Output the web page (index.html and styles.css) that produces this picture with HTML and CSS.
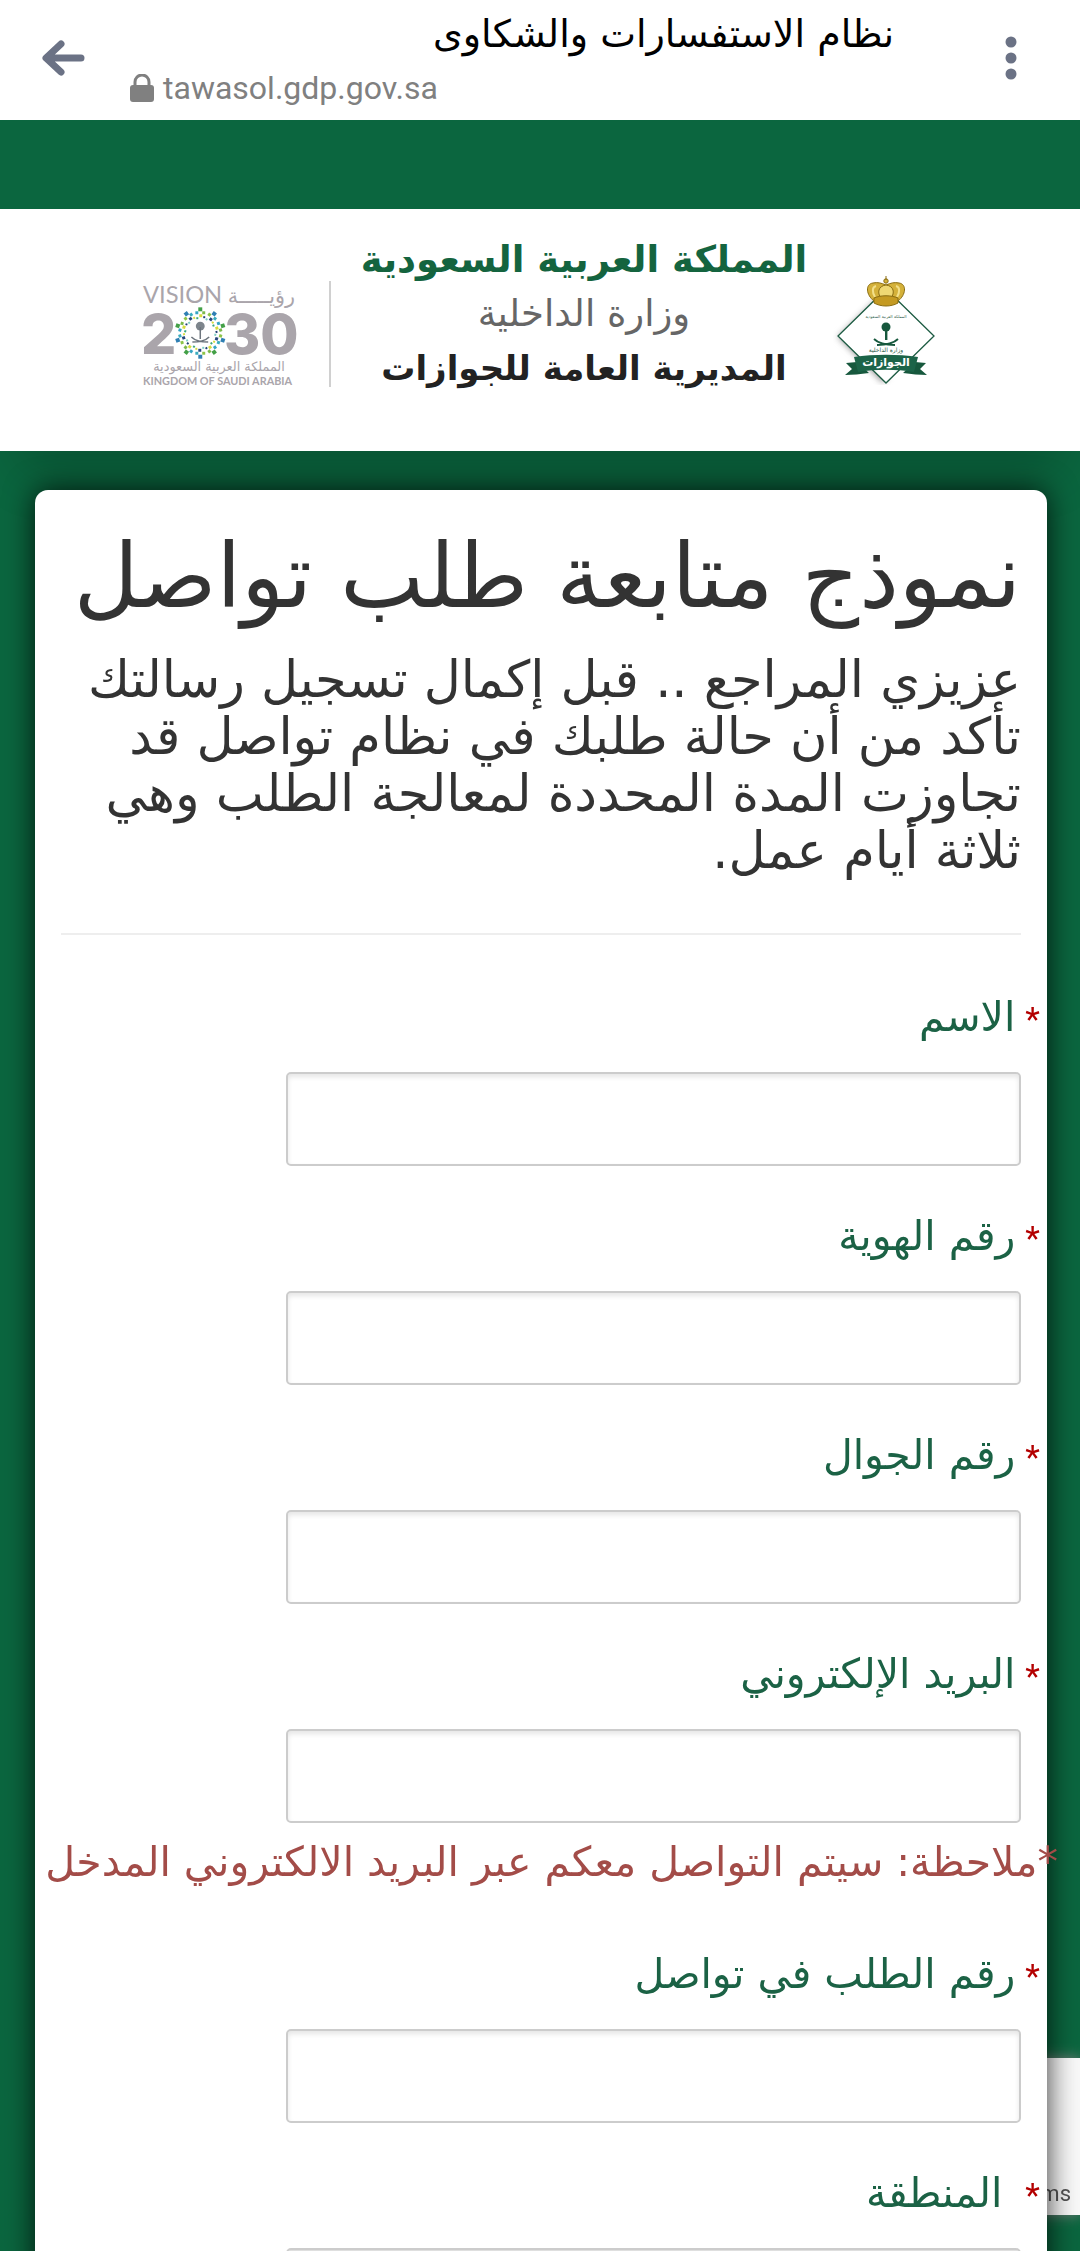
FILE: index.html
```html
<!DOCTYPE html>
<html lang="ar" dir="rtl">
<head>
    <meta charset="UTF-8">
    <meta name="viewport" content="width=device-width, initial-scale=1.0">
    <title>نظام الاستفسارات والشكاوى</title>
    <link rel="stylesheet" href="styles.css">
</head>
<body>
    <div class="browser-bar">
        <button class="icon-btn" type="button" aria-label="القائمة">
            <svg width="12" height="44" viewBox="0 0 12 44" fill="#6b7285">
                <circle cx="6" cy="6" r="5.5"/>
                <circle cx="6" cy="22" r="5.5"/>
                <circle cx="6" cy="38" r="5.5"/>
            </svg>
        </button>
        <div class="page-info">
            <div class="page-title">نظام الاستفسارات والشكاوى</div>
            <div class="page-url" dir="ltr">
                <svg width="24" height="28" viewBox="0 0 24 28">
                    <path d="M5 13V8a7 7 0 0 1 14 0v5" fill="none" stroke="#808080" stroke-width="3"/>
                    <rect x="0" y="11" width="24" height="17" rx="3" fill="#808080"/>
                </svg>
                <span>tawasol.gdp.gov.sa</span>
            </div>
        </div>
        <button class="icon-btn" type="button" aria-label="رجوع">
            <svg width="44" height="38" viewBox="0 0 44 38" fill="none" stroke="#6b7285" stroke-width="7" stroke-linecap="round" stroke-linejoin="round">
                <path d="M20 5L5 19l15 14M6 19h34"/>
            </svg>
        </button>
    </div>

    <div class="page">
        <header class="site-header">
            <svg class="emblem" width="104" height="112" viewBox="0 0 104 112">
                <path class="shadow" d="M50 20L5 64l45 46 6-8z"/>
                <path d="M53 16L101 63 53 110 5 63z" fill="#fff" stroke="#1c5b42" stroke-width="1.3"/>
                <g fill="#d4b13a" stroke="#8a6d12" stroke-width="1">
                    <path d="M41 28c-8-6-9-17-1-18 5-1 8 0 13 2 5-2 8-3 13-2 8 1 7 12-1 18-6 4-18 4-24 0z"/>
                    <path d="M42 24c-3-5-3-10 1-11M64 24c3-5 3-10-1-11" fill="none" stroke="#f3e08a" stroke-width="2"/>
                    <path d="M48 25c-4-5-3-12 5-13 8 1 9 8 5 13z" fill="#efd873"/>
                    <path d="M41 25c7-3 17-3 24 0v5c-7 4-17 4-24 0z" fill="#c49a22"/>
                    <circle cx="53" cy="8" r="2.2"/>
                    <path d="M53 3v4"/>
                </g>
                <text x="53" y="45" class="emblem-small emblem-country">المملكة العربية السعودية</text>
                <g fill="#17583d">
                    <circle cx="53" cy="54" r="4.5"/>
                    <path d="M52 57h2.400v10h-2.400z"/>
                </g>
                <g fill="none" stroke="#17583d" stroke-width="1.800">
                    <path d="M41 66c5 5 13 6 21 6M65 66c-5 5-13 6-21 6"/>
                </g>
                <text x="53" y="79" class="emblem-small">وزارة الداخلية</text>
                <path d="M24 89l-11 1 6 6-7 6c8 0 15-1 24-2zM82 89l11 1-6 6 7 6c-8 0-15-1-24-2z" fill="#17583d"/>
                <path d="M21 84c20-3 44-3 64 0l-4 15c-18-3-38-3-56 0z" fill="#1c6448"/>
                <text x="53" y="93" class="emblem-name">الجوازات</text>
            </svg>

            <div class="org">
                <div class="org-line org-country">المملكة العربية السعودية</div>
                <div class="org-line org-ministry">وزارة الداخلية</div>
                <div class="org-line org-dept">المديرية العامة للجوازات</div>
            </div>

            <svg class="vision" width="160" height="106" viewBox="0 0 160 106" direction="ltr">
                <defs>
                    <g id="ray">
                        <rect x="-2" y="-26" width="4" height="4" fill="#43a047"/>
                        <rect x="-5" y="-22" width="3" height="3" fill="#35a5c4"/>
                        <rect x="2" y="-22" width="3" height="3" fill="#7cb94a"/>
                        <rect x="-1" y="-19" width="3" height="3" fill="#d6dc3e"/>
                        <rect x="3" y="-17" width="2" height="2" fill="#1f3f74"/>
                        <rect x="-4" y="-16" width="2" height="2" fill="#3aa67d"/>
                    </g>
                    <g id="ray-blue">
                        <rect x="-2" y="-26" width="4" height="4" fill="#2f7fb3"/>
                        <rect x="-5" y="-22" width="3" height="3" fill="#8dc448"/>
                        <rect x="2" y="-22" width="3" height="3" fill="#3aacbf"/>
                        <rect x="-1" y="-19" width="3" height="3" fill="#27477c"/>
                        <rect x="3" y="-17" width="2" height="2" fill="#d6dc3e"/>
                        <rect x="-4" y="-16" width="2" height="2" fill="#7fd0c5"/>
                    </g>
                </defs>
                <text x="0" y="22" class="v-word">VISION</text>
                <text x="154" y="22" class="v-arabic">رؤيـــــة</text>
                <text x="-2" y="73" class="v-number">2</text>
                <text x="82" y="73" class="v-number">30</text>
                <g transform="translate(58 52)">
                    <use href="#ray"/>
                    <use href="#ray-blue" transform="rotate(36)"/>
                    <use href="#ray" transform="rotate(72)"/>
                    <use href="#ray-blue" transform="rotate(108)"/>
                    <use href="#ray" transform="rotate(144)"/>
                    <use href="#ray-blue" transform="rotate(180)"/>
                    <use href="#ray" transform="rotate(216)"/>
                    <use href="#ray-blue" transform="rotate(252)"/>
                    <use href="#ray" transform="rotate(288)"/>
                    <use href="#ray-blue" transform="rotate(324)"/>
                    <circle cx="0" cy="-7" r="4.500" fill="#7d858c"/>
                    <path d="M0-6V6M-9 4c5 5 11 5 17 5M9 4c-5 5-11 5-17 5" fill="none" stroke="#6d757d" stroke-width="1.500"/>
                </g>
                <text x="77" y="90" class="v-kingdom-ar">المملكة العربية السعودية</text>
                <text x="0" y="105" class="v-kingdom-en">KINGDOM OF SAUDI ARABIA</text>
            </svg>
        </header>

        <main class="card">
            <h1>نموذج متابعة طلب تواصل</h1>
            <p class="intro">
                عزيزي المراجع .. قبل إكمال تسجيل رسالتك<br>
                تأكد من أن حالة طلبك في نظام تواصل قد<br>
                تجاوزت المدة المحددة لمعالجة الطلب وهي<br>
                ثلاثة أيام عمل.
            </p>
            <hr>

            <form class="follow-form">
                <div class="field">
                    <label for="name"><span class="req">*</span>الاسم</label>
                    <input type="text" id="name">
                </div>
                <div class="field">
                    <label for="identity"><span class="req">*</span>رقم الهوية</label>
                    <input type="text" id="identity">
                </div>
                <div class="field">
                    <label for="mobile"><span class="req">*</span>رقم الجوال</label>
                    <input type="tel" id="mobile">
                </div>
                <div class="field">
                    <label for="email"><span class="req">*</span>البريد الإلكتروني</label>
                    <input type="email" id="email">
                    <p class="note">*ملاحظة: سيتم التواصل معكم عبر البريد الالكتروني المدخل</p>
                </div>
                <div class="field">
                    <label for="request"><span class="req">*</span>رقم الطلب في تواصل</label>
                    <input type="text" id="request">
                </div>
                <div class="field">
                    <label for="region"><span class="req">*</span>&nbsp;المنطقة</label>
                    <select id="region"></select>
                </div>
            </form>
        </main>
    </div>

    <div class="captcha-badge" dir="ltr">ms</div>
</body>
</html>
```
FILE: styles.css
```css
* {
    box-sizing: border-box;
}

body {
    margin: 0;
    height: 100vh;
    display: flex;
    flex-direction: column;
    overflow: hidden;
    background-color: #0b663f;
    font-family: "DejaVu Sans", sans-serif;
    color: #333;
}

/* in-app browser bar */
.browser-bar {
    height: 120px;
    flex-shrink: 0;
    display: flex;
    align-items: center;
    padding: 0 46px 4px 40px;
    background: #fff;
}

.icon-btn {
    border: none;
    background: none;
    padding: 0;
    display: flex;
    width: 46px;
    justify-content: center;
}

.page-info {
    flex: 1;
    display: flex;
    flex-direction: column;
    padding: 4px 94px 0 44px;
}

.page-title {
    font-size: 38px;
    line-height: 56px;
    color: #000;
    white-space: nowrap;
}

.page-url {
    display: flex;
    align-items: center;
    gap: 9px;
    font-family: Roboto, sans-serif;
    font-size: 32px;
    line-height: 52px;
    color: #808080;
}

/* scrolling web page */
.page {
    flex: 1;
    min-height: 0;
    overflow: hidden;
    padding-top: 89px;
}

.site-header {
    height: 242px;
    display: flex;
    justify-content: center;
    align-items: flex-start;
    padding-top: 24px;
    background: #fff;
    box-shadow: 0 40px 50px -20px rgba(0, 0, 0, 0.2);
}

.emblem {
    margin-top: 40px;
}

.emblem .shadow {
    fill: #999;
    filter: blur(3px);
}

.emblem text {
    text-anchor: middle;
    font-family: "DejaVu Sans", sans-serif;
}

.emblem-small {
    font-size: 6px;
    fill: #2c5c48;
}

.emblem-country {
    font-size: 4px;
}

.emblem-name {
    font-size: 11px;
    font-weight: bold;
    fill: #fff;
}

.org {
    margin: 0 26px 0 30px;
    text-align: center;
    white-space: nowrap;
}

.org-line {
    font-size: 37px;
    line-height: 54px;
}

.org-country {
    color: #14643f;
    font-weight: bold;
}

.org-ministry {
    color: #666;
}

.org-dept {
    font-size: 34px;
    color: #222;
    font-weight: bold;
}

.vision {
    margin-top: 48px;
    padding-right: 28px;
    border-right: 2px solid #d0d0d0;
    width: 188px;
    overflow: visible;
}

.vision text {
    fill: #aaa5ab;
    font-family: Lato, sans-serif;
}

.v-word {
    font-size: 24px;
}

.vision .v-arabic {
    font-family: "DejaVu Sans", sans-serif;
    font-size: 21px;
    text-anchor: end;
}

.vision .v-number {
    font-family: Inter, sans-serif;
    font-size: 56px;
    font-weight: 800;
}

.vision .v-kingdom-ar {
    font-family: "DejaVu Sans", sans-serif;
    font-size: 13px;
    text-anchor: middle;
}

.v-kingdom-en {
    font-size: 11px;
    font-weight: bold;
}

.card {
    position: relative;
    z-index: 2;
    margin: 39px 33px 0 35px;
    padding: 36px 26px 60px;
    background: #fff;
    border-radius: 13px;
    box-shadow: 0 0 30px rgba(0, 0, 0, 0.8);
}

.card h1 {
    margin: 0;
    font-size: 89px;
    line-height: 100px;
    font-weight: normal;
    white-space: nowrap;
}

.intro {
    margin: 25px 0 0;
    font-size: 51px;
    line-height: 57px;
    white-space: nowrap;
}

.card hr {
    margin: 54px 0 51px;
    border: none;
    border-top: 2px solid #eee;
}

.field {
    margin-bottom: 39px;
}

.field label {
    display: block;
    margin-right: -19px;
    padding: 1px 0 25px;
    font-size: 41px;
    line-height: 60px;
    color: #1b6245;
    white-space: nowrap;
}

.req {
    margin-left: 10px;
    font-family: Roboto, sans-serif;
    font-size: 34px;
    line-height: 32px;
    color: #b30000;
}

.field input,
.field select {
    display: block;
    width: calc(100% - 225px);
    height: 94px;
    padding: 0 16px;
    border: 2px solid #ccc;
    border-radius: 5px;
    background: #fff;
    box-shadow: inset 0 3px 5px rgba(0, 0, 0, 0.1);
    font: 36px "DejaVu Sans", sans-serif;
    appearance: none;
}

.field select {
    background: #f4f4f4;
}

.note {
    margin: 6px -37px 48px;
    font-size: 41px;
    line-height: 66px;
    color: #a34c48;
    white-space: nowrap;
}

/* the badge sticks out from behind the card */
.captcha-badge {
    position: fixed;
    right: 0;
    bottom: 36px;
    z-index: 1;
    width: 180px;
    height: 157px;
    padding: 118px 9px 0 0;
    background: #f9f9f9;
    box-shadow: 0 0 13px #808080;
    font-family: Roboto, sans-serif;
    font-size: 22px;
    line-height: 36px;
    text-align: right;
    color: #555;
}
```
